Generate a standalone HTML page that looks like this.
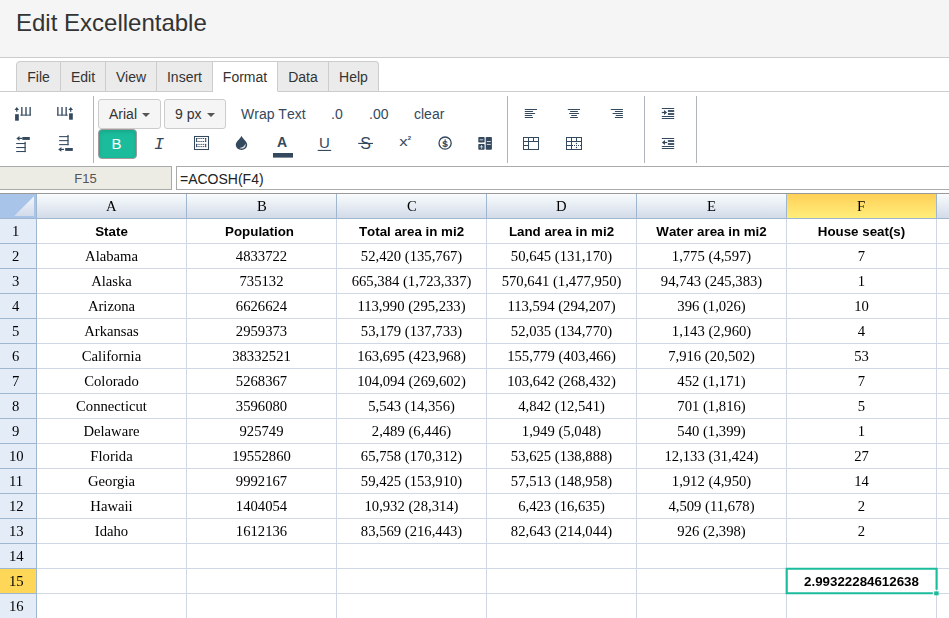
<!DOCTYPE html>
<html><head><meta charset="utf-8"><title>Edit Excellentable</title>
<style>
*{box-sizing:border-box}
html,body{margin:0;padding:0}
body{width:949px;height:618px;overflow:hidden;background:#fff;font-family:"Liberation Sans",Arial,sans-serif;position:relative;color:#333}
.hdr{position:absolute;left:0;top:0;width:949px;height:58px;background:#f5f5f5;border-bottom:1px solid #ccc}
.hdr h1{margin:0;position:absolute;left:16px;top:9px;font-size:24px;font-weight:normal;color:#333;line-height:28px}
.tabs{position:absolute;left:0;top:58px;width:949px;height:34px;border-bottom:1px solid #ccc}
.tab{position:absolute;top:3px;height:31px;background:#ebebeb;border:1px solid #ccc;border-left:none;font-size:14px;line-height:31px;text-align:center;color:#333}
.tab.first{border-left:1px solid #ccc;border-top-left-radius:4px}
.tab.last{border-top-right-radius:4px}
.tab.act{background:#fff;border-bottom-color:#fff}
.tb{position:absolute;left:0;top:92px;width:949px;height:72px}
.vsep{position:absolute;top:4px;width:1px;height:67px;background:#b0b4bb}
.dd{position:absolute;height:30px;border:1px solid #ccc;border-radius:3px;background:#f5f5f5;font-size:14px;color:#333;line-height:28px;padding-left:10px}
.dd i{position:absolute;right:10px;top:13px;width:0;height:0;border-left:4px solid transparent;border-right:4px solid transparent;border-top:4px solid #555}
.tt{position:absolute;font-size:14px;color:#34495e;line-height:18px;white-space:nowrap}
.ic{position:absolute}
.ti{position:absolute;color:#34495e;text-align:center;line-height:28px;height:28px}
.bbtn{position:absolute;left:98px;top:37px;width:39px;height:30px;background:#1abc9c;border:1px solid #a59a9a;border-radius:4px;color:#fff;font-size:15px;text-align:center;line-height:28px;padding-right:2px;box-shadow:inset 0 2px 4px rgba(0,0,0,.12)}
.nb{position:absolute;left:-1px;top:166px;width:173px;height:24px;background:#ecebe4;border:1px solid #aaa;font-size:13px;color:#555;text-align:center;line-height:24px}
.fx{position:absolute;left:176px;top:166px;width:800px;height:24px;background:#fff;border:1px solid #aaa;font-size:14px;color:#222;line-height:24px;padding-left:3px}
.gtop{position:absolute;left:0;top:193px;width:949px;height:1px;background:#999}
.grid{position:absolute;left:0;top:0;width:949px;height:618px;
 }
.gbg{position:absolute;left:37px;top:219px;width:912px;height:399px;
 background-image:linear-gradient(to right,transparent 149px,#d0d7e5 149px),linear-gradient(to bottom,transparent 24px,#d0d7e5 24px);
 background-size:150px 25px,150px 25px}
.corner{position:absolute;left:0;top:194px;width:37px;height:25px;background:#a9c4e9;border-right:1px solid #9eb6ce;border-bottom:1px solid #9eb6ce}
.ch{position:absolute;top:194px;width:150px;height:25px;border-right:1px solid #9eb6ce;border-bottom:1px solid #9eb6ce;background:linear-gradient(#f9fcfd,#d3dbe9);font-family:"Liberation Serif",serif;font-size:14.667px;text-align:center;line-height:24px;color:#000}
.ch.sel{background:linear-gradient(#ffd058,#ffee7a)}
.rh{position:absolute;left:0;width:37px;height:25px;border-right:1px solid #9eb6ce;border-bottom:1px solid #9eb6ce;background:#e4ecf7;font-family:"Liberation Serif",serif;font-size:14.667px;text-align:center;line-height:24px;color:#000;padding-right:5px}
.rh.sel{background:#ffd758}
.c{position:absolute;width:149px;height:24px;font-family:"Liberation Serif",serif;font-size:14.667px;text-align:center;line-height:24px;color:#000;white-space:nowrap;will-change:transform}
.ch span,.rh span{display:inline-block;will-change:transform}
.c.b{font-family:"Liberation Sans",sans-serif;font-weight:bold;font-size:13.333px;line-height:26px;font-kerning:none}
.selbox{position:absolute;left:785px;top:567px;width:153px;height:28px;border:2px solid #1abc9c}
.selhandle{position:absolute;left:934px;top:591px;width:5px;height:5px;background:#1abc9c;border:0 solid #fff}
</style></head><body>
<div class="hdr"><h1>Edit Excellentable</h1></div>
<div class="tabs">
<div class="tab first" style="left:16px;width:45px">File</div>
<div class="tab" style="left:61px;width:45px">Edit</div>
<div class="tab" style="left:106px;width:51px">View</div>
<div class="tab" style="left:157px;width:56px">Insert</div>
<div class="tab act" style="left:213px;width:65px">Format</div>
<div class="tab" style="left:278px;width:51px">Data</div>
<div class="tab last" style="left:329px;width:50px">Help</div>
</div>
<div class="tb">
<div class="vsep" style="left:93px"></div>
<div class="vsep" style="left:507px"></div>
<div class="vsep" style="left:644px"></div>
<div class="vsep" style="left:696px"></div>
<div class="dd" style="left:98px;top:7px;width:63px;padding-left:10px">Arial<i></i></div>
<div class="dd" style="left:164px;top:7px;width:62px">9 px<i></i></div>
<div class="tt" style="left:241px;top:13px;font-kerning:none">Wrap Text</div>
<div class="tt" style="left:331px;top:13px">.0</div>
<div class="tt" style="left:369px;top:13px">.00</div>
<div class="tt" style="left:414px;top:13px">clear</div>
<div class="bbtn">B</div>
<svg class="ic" style="left:0;top:0" width="949" height="72" viewBox="0 92 949 72" fill="#34495e" stroke="none">
<polygon points="16.80,107.00 19.10,109.90 14.50,109.90" />
<rect x="16.20" y="109.50" width="1.20" height="2.30" />
<rect x="15.10" y="114.20" width="3.70" height="6.50" />
<rect x="21.18" y="107.00" width="1.34" height="8.60" />
<rect x="25.33" y="107.00" width="1.34" height="8.60" />
<rect x="29.48" y="107.00" width="1.34" height="8.60" />
<rect x="20.40" y="114.60" width="10.30" height="1.00" />
<rect x="57.18" y="107.00" width="1.34" height="8.60" />
<rect x="61.33" y="107.00" width="1.34" height="8.60" />
<rect x="65.48" y="107.00" width="1.34" height="8.60" />
<rect x="57.30" y="114.60" width="10.40" height="1.00" />
<polygon points="70.70,107.00 73.00,109.90 68.40,109.90" />
<rect x="70.10" y="109.50" width="1.20" height="2.30" />
<rect x="69.10" y="113.30" width="3.70" height="6.40" />
<polygon points="16.30,138.40 19.50,136.00 19.50,140.80" />
<rect x="19.10" y="137.80" width="3.00" height="1.20" />
<rect x="22.30" y="137.00" width="7.50" height="2.90" />
<rect x="16.20" y="143.00" width="9.40" height="1.05" />
<rect x="16.20" y="147.00" width="9.40" height="1.05" />
<rect x="16.20" y="151.00" width="9.40" height="1.05" />
<rect x="24.50" y="141.80" width="1.20" height="10.30" />
<rect x="59.10" y="136.10" width="9.40" height="1.05" />
<rect x="59.10" y="140.10" width="9.40" height="1.05" />
<rect x="59.10" y="144.10" width="9.40" height="1.05" />
<rect x="67.40" y="134.90" width="1.20" height="10.30" />
<polygon points="58.20,149.40 61.40,147.00 61.40,151.80" />
<rect x="61.00" y="148.80" width="3.00" height="1.20" />
<rect x="65.20" y="148.00" width="7.60" height="2.90" />
<rect x="194.5" y="136.5" width="14" height="13" fill="none" stroke="#34495e" stroke-width="1.05"/>
<path d="M196.2 138.5H206.1M196.2 141.5H206.1" fill="none" stroke="#34495e" stroke-width="1" stroke-dasharray="1.3 0.85"/>
<rect x="196.10" y="138.00" width="1.00" height="4.00" />
<rect x="205.20" y="138.00" width="1.00" height="4.00" />
<path d="M196.2 144.4H206.1M196.2 146.6H206.1" fill="none" stroke="#34495e" stroke-width="1" stroke-dasharray="1.3 0.85"/>
<rect x="196.10" y="143.90" width="1.00" height="3.20" />
<rect x="205.20" y="143.90" width="1.00" height="3.20" />
<path d="M241.5 135.7 C242.8 138.9 247.2 141.4 247.2 144.8 C247.2 147.7 244.6 149.9 241.5 149.9 C238.4 149.9 235.8 147.7 235.8 144.8 C235.8 141.4 240.2 138.9 241.5 135.7 Z"/>
<path d="M245.5 143.4 C246.1 146.3 244.3 148.5 241.7 148.6 C240.8 148.65 240.0 148.4 239.5 147.9 C242.4 147.7 244.6 146.2 245.5 143.4 Z" fill="#fff" opacity="0.85"/>
<rect x="273.00" y="153.00" width="20.00" height="4.60" />
<rect x="317.70" y="149.90" width="13.50" height="1.10" />
<rect x="358.20" y="142.90" width="14.80" height="1.10" />
<circle cx="445.1" cy="143.1" r="6.1" fill="none" stroke="#34495e" stroke-width="1.3"/>
<rect x="444.75" y="139.00" width="0.75" height="8.20" />
<rect x="478.30" y="136.90" width="6.30" height="5.70" rx="0.8"/>
<rect x="478.30" y="143.90" width="6.30" height="5.90" rx="0.8"/>
<rect x="485.70" y="136.90" width="6.20" height="12.90" rx="0.8"/>
<g fill="#cfd6dc">
<rect x="479.70" y="139.30" width="3.50" height="1.00" />
<rect x="479.70" y="146.40" width="3.50" height="0.90" />
<rect x="481.00" y="145.00" width="0.90" height="3.70" />
<rect x="486.80" y="141.00" width="4.00" height="1.00" />
<rect x="486.80" y="143.90" width="4.00" height="1.00" />
</g>
<rect x="524.70" y="109.00" width="12.40" height="1.05" rx="0.5"/>
<rect x="524.70" y="111.00" width="8.40" height="1.05" rx="0.5"/>
<rect x="524.70" y="113.00" width="10.50" height="1.05" rx="0.5"/>
<rect x="524.70" y="115.00" width="7.60" height="1.05" rx="0.5"/>
<rect x="524.70" y="117.00" width="8.40" height="1.05" rx="0.5"/>
<rect x="567.70" y="109.00" width="12.40" height="1.05" rx="0.5"/>
<rect x="570.00" y="111.00" width="8.00" height="1.05" rx="0.5"/>
<rect x="569.00" y="113.00" width="10.20" height="1.05" rx="0.5"/>
<rect x="571.00" y="115.00" width="6.00" height="1.05" rx="0.5"/>
<rect x="570.00" y="117.00" width="8.00" height="1.05" rx="0.5"/>
<rect x="610.60" y="109.00" width="12.40" height="1.05" rx="0.5"/>
<rect x="614.80" y="111.00" width="8.20" height="1.05" rx="0.5"/>
<rect x="612.50" y="113.00" width="10.50" height="1.05" rx="0.5"/>
<rect x="615.70" y="115.00" width="7.30" height="1.05" rx="0.5"/>
<rect x="614.80" y="117.00" width="8.20" height="1.05" rx="0.5"/>
<g fill="none" stroke="#34495e" stroke-width="1">
<rect x="523.5" y="137.5" width="15" height="12"/>
<path d="M528.5 137.5V149.5M533.5 137.5V141.5M523 141.5H539M523 145.5H528.5"/>
</g>
<g fill="none" stroke="#34495e" stroke-width="1">
<rect x="566.5" y="137.5" width="15" height="12"/>
<path d="M571.5 137.5V149.5M576.5 137.5V141.5M566 141.5H582M566 145.5H571.5"/>
<path d="M572 145.5H582" stroke-dasharray="1 1"/>
</g>
<circle cx="576.5" cy="143.5" r="0.7"/><circle cx="576.5" cy="147.5" r="0.7"/>
<rect x="661.80" y="108.00" width="12.40" height="1.00" />
<rect x="667.90" y="110.10" width="6.30" height="1.80" />
<rect x="667.90" y="113.10" width="6.30" height="1.80" />
<rect x="661.80" y="116.00" width="12.40" height="1.00" />
<rect x="661.80" y="118.00" width="12.40" height="1.00" />
<rect x="661.80" y="111.90" width="3.20" height="1.20" />
<polygon points="667.10,112.50 664.00,110.10 664.00,114.90" />
<rect x="661.80" y="138.00" width="12.40" height="1.00" />
<rect x="667.90" y="140.10" width="6.30" height="1.80" />
<rect x="667.90" y="143.10" width="6.30" height="1.80" />
<rect x="661.80" y="146.00" width="12.40" height="1.00" />
<rect x="661.80" y="148.00" width="12.40" height="1.00" />
<rect x="664.00" y="141.90" width="3.20" height="1.20" />
<polygon points="661.90,142.50 665.00,140.10 665.00,144.90" />
</svg>
<div class="ti" style="left:149px;top:39px;width:20px;font-family:'Liberation Mono',monospace;font-style:italic;font-size:17px">I</div>
<div class="ti" style="left:272px;top:36px;width:20px;font-weight:bold;font-size:14px">A</div>
<div class="ti" style="left:314px;top:37px;width:21px;font-size:15px">U</div>
<div class="ti" style="left:355px;top:38px;width:21px;font-size:16px">S</div>
<div class="ti" style="left:398px;top:36px;width:11px;font-size:13px;transform:scaleX(1.3)">x</div>
<div class="ti" style="left:406.5px;top:35.5px;width:6px;font-size:6px;font-weight:bold;line-height:20px">2</div>
<div class="ti" style="left:440px;top:37.5px;width:10px;font-size:10px;font-weight:bold;transform:scaleY(0.92)">$</div>
</div>
<div class="nb">F15</div>
<div class="fx">=ACOSH(F4)</div>
<div class="gtop"></div>
<svg width="0" height="0" style="position:absolute"><defs><linearGradient id="cg" x1="0" y1="0" x2="0" y2="1"><stop offset="0" stop-color="#f3f6fb"/><stop offset="1" stop-color="#d2dbeb"/></linearGradient></defs></svg>
<div class="gbg"></div>
<div class="grid">
<div class="corner"><svg width="36" height="24"><polygon points="14.2,22 34,22 34,2.2" fill="url(#cg)"/></svg></div>
<div class="ch" style="left:37px"><span>A</span></div>
<div class="ch" style="left:187px"><span>B</span></div>
<div class="ch" style="left:337px"><span>C</span></div>
<div class="ch" style="left:487px"><span>D</span></div>
<div class="ch" style="left:637px"><span>E</span></div>
<div class="ch sel" style="left:787px"><span>F</span></div>
<div class="ch" style="left:937px"><span>G</span></div>
<div class="rh" style="top:219px"><span>1</span></div>
<div class="c b" style="left:37px;top:219px">State</div>
<div class="c b" style="left:185px;top:219px">Population</div>
<div class="c b" style="left:337px;top:219px">Total area in mi2</div>
<div class="c b" style="left:487px;top:219px">Land area in mi2</div>
<div class="c b" style="left:637px;top:219px">Water area in mi2</div>
<div class="c b" style="left:787px;top:219px">House seat(s)</div>
<div class="rh" style="top:244px"><span>2</span></div>
<div class="c" style="left:37px;top:244px">Alabama</div>
<div class="c" style="left:187px;top:244px">4833722</div>
<div class="c" style="left:337px;top:244px">52,420 (135,767)</div>
<div class="c" style="left:487px;top:244px">50,645 (131,170)</div>
<div class="c" style="left:637px;top:244px">1,775 (4,597)</div>
<div class="c" style="left:787px;top:244px">7</div>
<div class="rh" style="top:269px"><span>3</span></div>
<div class="c" style="left:37px;top:269px">Alaska</div>
<div class="c" style="left:187px;top:269px">735132</div>
<div class="c" style="left:337px;top:269px">665,384 (1,723,337)</div>
<div class="c" style="left:487px;top:269px">570,641 (1,477,950)</div>
<div class="c" style="left:637px;top:269px">94,743 (245,383)</div>
<div class="c" style="left:787px;top:269px">1</div>
<div class="rh" style="top:294px"><span>4</span></div>
<div class="c" style="left:37px;top:294px">Arizona</div>
<div class="c" style="left:187px;top:294px">6626624</div>
<div class="c" style="left:337px;top:294px">113,990 (295,233)</div>
<div class="c" style="left:487px;top:294px">113,594 (294,207)</div>
<div class="c" style="left:637px;top:294px">396 (1,026)</div>
<div class="c" style="left:787px;top:294px">10</div>
<div class="rh" style="top:319px"><span>5</span></div>
<div class="c" style="left:37px;top:319px">Arkansas</div>
<div class="c" style="left:187px;top:319px">2959373</div>
<div class="c" style="left:337px;top:319px">53,179 (137,733)</div>
<div class="c" style="left:487px;top:319px">52,035 (134,770)</div>
<div class="c" style="left:637px;top:319px">1,143 (2,960)</div>
<div class="c" style="left:787px;top:319px">4</div>
<div class="rh" style="top:344px"><span>6</span></div>
<div class="c" style="left:37px;top:344px">California</div>
<div class="c" style="left:187px;top:344px">38332521</div>
<div class="c" style="left:337px;top:344px">163,695 (423,968)</div>
<div class="c" style="left:487px;top:344px">155,779 (403,466)</div>
<div class="c" style="left:637px;top:344px">7,916 (20,502)</div>
<div class="c" style="left:787px;top:344px">53</div>
<div class="rh" style="top:369px"><span>7</span></div>
<div class="c" style="left:37px;top:369px">Colorado</div>
<div class="c" style="left:187px;top:369px">5268367</div>
<div class="c" style="left:337px;top:369px">104,094 (269,602)</div>
<div class="c" style="left:487px;top:369px">103,642 (268,432)</div>
<div class="c" style="left:637px;top:369px">452 (1,171)</div>
<div class="c" style="left:787px;top:369px">7</div>
<div class="rh" style="top:394px"><span>8</span></div>
<div class="c" style="left:37px;top:394px">Connecticut</div>
<div class="c" style="left:187px;top:394px">3596080</div>
<div class="c" style="left:337px;top:394px">5,543 (14,356)</div>
<div class="c" style="left:487px;top:394px">4,842 (12,541)</div>
<div class="c" style="left:637px;top:394px">701 (1,816)</div>
<div class="c" style="left:787px;top:394px">5</div>
<div class="rh" style="top:419px"><span>9</span></div>
<div class="c" style="left:37px;top:419px">Delaware</div>
<div class="c" style="left:187px;top:419px">925749</div>
<div class="c" style="left:337px;top:419px">2,489 (6,446)</div>
<div class="c" style="left:487px;top:419px">1,949 (5,048)</div>
<div class="c" style="left:637px;top:419px">540 (1,399)</div>
<div class="c" style="left:787px;top:419px">1</div>
<div class="rh" style="top:444px;padding-right:3px"><span>10</span></div>
<div class="c" style="left:37px;top:444px">Florida</div>
<div class="c" style="left:187px;top:444px">19552860</div>
<div class="c" style="left:337px;top:444px">65,758 (170,312)</div>
<div class="c" style="left:487px;top:444px">53,625 (138,888)</div>
<div class="c" style="left:637px;top:444px">12,133 (31,424)</div>
<div class="c" style="left:787px;top:444px">27</div>
<div class="rh" style="top:469px;padding-right:3px"><span>11</span></div>
<div class="c" style="left:37px;top:469px">Georgia</div>
<div class="c" style="left:187px;top:469px">9992167</div>
<div class="c" style="left:337px;top:469px">59,425 (153,910)</div>
<div class="c" style="left:487px;top:469px">57,513 (148,958)</div>
<div class="c" style="left:637px;top:469px">1,912 (4,950)</div>
<div class="c" style="left:787px;top:469px">14</div>
<div class="rh" style="top:494px;padding-right:3px"><span>12</span></div>
<div class="c" style="left:37px;top:494px">Hawaii</div>
<div class="c" style="left:187px;top:494px">1404054</div>
<div class="c" style="left:337px;top:494px">10,932 (28,314)</div>
<div class="c" style="left:487px;top:494px">6,423 (16,635)</div>
<div class="c" style="left:637px;top:494px">4,509 (11,678)</div>
<div class="c" style="left:787px;top:494px">2</div>
<div class="rh" style="top:519px;padding-right:3px"><span>13</span></div>
<div class="c" style="left:37px;top:519px">Idaho</div>
<div class="c" style="left:187px;top:519px">1612136</div>
<div class="c" style="left:337px;top:519px">83,569 (216,443)</div>
<div class="c" style="left:487px;top:519px">82,643 (214,044)</div>
<div class="c" style="left:637px;top:519px">926 (2,398)</div>
<div class="c" style="left:787px;top:519px">2</div>
<div class="rh" style="top:544px;padding-right:3px"><span>14</span></div>
<div class="rh sel" style="top:569px;padding-right:3px"><span>15</span></div>
<div class="c b" style="left:787px;top:569px">2.99322284612638</div>
<div class="rh" style="top:594px;padding-right:3px"><span>16</span></div>
<svg class="selsvg" width="949" height="618" style="position:absolute;left:0;top:0"><path d="M936.6 589.8V568.7H786.7V593.2H932.8" fill="none" stroke="#1abc9c" stroke-width="2.15" stroke-linejoin="miter"/><rect x="934.2" y="591.4" width="4.4" height="3.9" fill="#1abc9c"/></svg>
</div>
</body></html>
